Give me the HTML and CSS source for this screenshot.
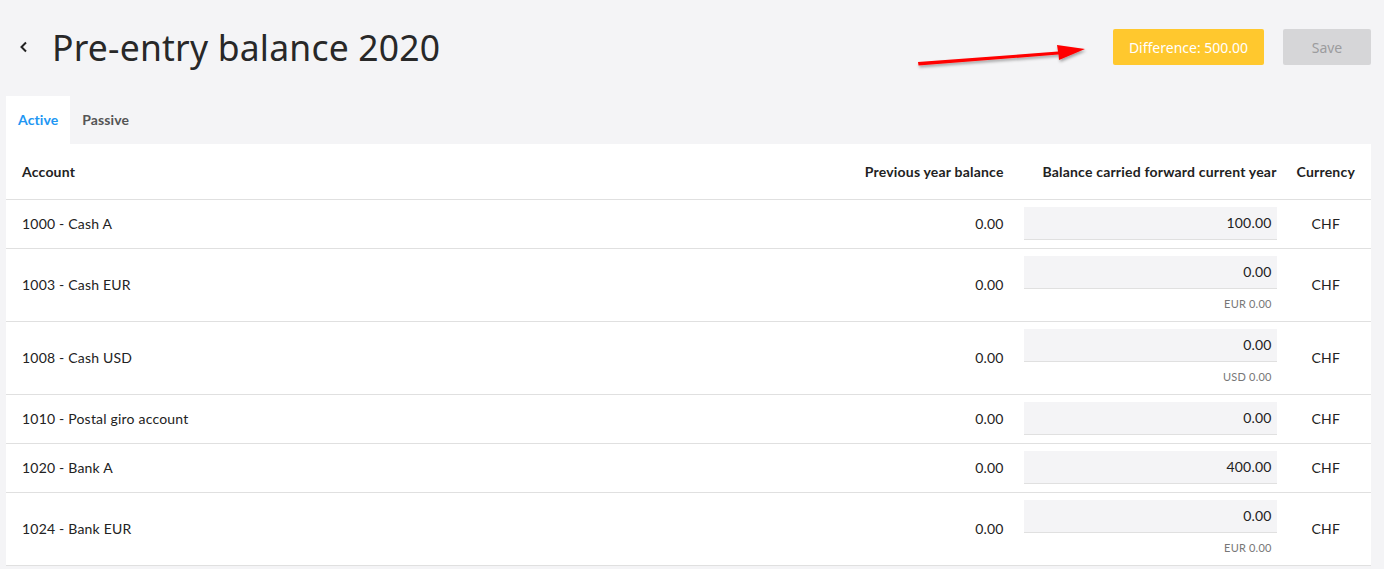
FILE: index.html
```html
<!DOCTYPE html>
<html lang="en">
<head>
    <meta charset="UTF-8">
    <title>Pre-entry balance 2020</title>
    <link rel="stylesheet" href="styles.css">
</head>
<body>

    <div class="page-header">
        <div class="title-wrap">
            <a class="back-link" href="#">
                <svg width="10" height="12" viewBox="0 0 10 12"><path d="M7 1.5 L2.5 6 L7 10.5" fill="none" stroke="#222" stroke-width="2"/></svg>
            </a>
            <h1>Pre-entry balance 2020</h1>
        </div>
        <div class="actions">
            <button class="btn-diff">Difference: 500.00</button>
            <button class="btn-save" disabled>Save</button>
        </div>
        <svg class="arrow" width="200" height="40" viewBox="0 0 200 40">
            <defs>
                <filter id="sh" x="-10%" y="-50%" width="120%" height="200%">
                    <feDropShadow dx="1" dy="2" stdDeviation="1.5" flood-color="#000" flood-opacity="0.35"/>
                </filter>
            </defs>
            <g filter="url(#sh)">
                <polygon points="10,29 150,18.5 149,12 177,16 151,27 150.5,21.5 10.5,32.5" fill="#ff0000"/>
            </g>
        </svg>
    </div>

    <div class="tabs">
        <div class="tab active">Active</div>
        <div class="tab">Passive</div>
    </div>

    <div class="panel">
        <table class="balance-table">
            <thead>
                <tr>
                    <th class="col-account">Account</th>
                    <th class="col-prev">Previous year balance</th>
                    <th class="col-current">Balance carried forward current year</th>
                    <th class="col-currency">Currency</th>
                </tr>
            </thead>
            <tbody>
                <tr>
                    <td class="col-account">1000 - Cash A</td>
                    <td class="col-prev">0.00</td>
                    <td class="col-current"><div class="amount">100.00</div></td>
                    <td class="col-currency">CHF</td>
                </tr>
                <tr class="tall">
                    <td class="col-account">1003 - Cash EUR</td>
                    <td class="col-prev">0.00</td>
                    <td class="col-current"><div class="amount">0.00</div><div class="foreign">EUR 0.00</div></td>
                    <td class="col-currency">CHF</td>
                </tr>
                <tr class="tall">
                    <td class="col-account">1008 - Cash USD</td>
                    <td class="col-prev">0.00</td>
                    <td class="col-current"><div class="amount">0.00</div><div class="foreign">USD 0.00</div></td>
                    <td class="col-currency">CHF</td>
                </tr>
                <tr>
                    <td class="col-account">1010 - Postal giro account</td>
                    <td class="col-prev">0.00</td>
                    <td class="col-current"><div class="amount">0.00</div></td>
                    <td class="col-currency">CHF</td>
                </tr>
                <tr>
                    <td class="col-account">1020 - Bank A</td>
                    <td class="col-prev">0.00</td>
                    <td class="col-current"><div class="amount">400.00</div></td>
                    <td class="col-currency">CHF</td>
                </tr>
                <tr class="tall">
                    <td class="col-account">1024 - Bank EUR</td>
                    <td class="col-prev">0.00</td>
                    <td class="col-current"><div class="amount">0.00</div><div class="foreign">EUR 0.00</div></td>
                    <td class="col-currency">CHF</td>
                </tr>
            </tbody>
        </table>
    </div>

</body>
</html>
```

FILE: styles.css
```css
* {
    margin: 0;
    padding: 0;
    box-sizing: border-box;
}

body {
    background-color: #f4f4f6;
    font-family: Lato, "Noto Sans", sans-serif;
    color: #222;
    padding: 0 13px 0 6px;
}

/* Header */
.page-header {
    position: relative;
    display: flex;
    justify-content: space-between;
    align-items: center;
    height: 96px;
    padding-bottom: 2px;
}

.title-wrap {
    display: flex;
    align-items: center;
}

.back-link {
    display: flex;
    width: 46px;
    padding-left: 13px;
}

h1 {
    font-family: "Noto Sans", sans-serif;
    font-weight: 400;
    font-size: 35.5px;
    color: #282828;
    letter-spacing: 0.2px;
}

.actions {
    display: flex;
    gap: 19px;
}

button {
    height: 36px;
    border: none;
    border-radius: 2px;
    font-family: "Noto Sans", sans-serif;
    font-size: 14px;
}

.btn-diff {
    width: 151px;
    background-color: #ffc82e;
    color: white;
}

.btn-save {
    width: 88px;
    background-color: #d6d6d8;
    color: #9c9c9e;
}

.arrow {
    position: absolute;
    left: 902px;
    top: 33px;
}

/* Tabs */
.tabs {
    display: flex;
    height: 48px;
}

.tab {
    display: flex;
    align-items: center;
    padding: 0 12px 2px;
    font-size: 14px;
    font-weight: bold;
    color: #555;
    letter-spacing: 0.1px;
}

.tab.active {
    background: white;
    color: #2196f3;
}

/* Table */
.panel {
    background: white;
}

.balance-table {
    width: 100%;
    border-collapse: collapse;
    font-size: 14px;
    letter-spacing: 0.2px;
}

.balance-table th {
    height: 55px;
    font-weight: bold;
    border-bottom: 1px solid #e0e0e0;
}

.balance-table td {
    height: 49px;
    border-bottom: 1px solid #e0e0e0;
}

.balance-table tr.tall td {
    height: 73px;
}

.col-account {
    text-align: left;
    padding-left: 16px;
}

.col-prev {
    width: 160px;
    text-align: right;
    padding-right: 10px;
}

.col-current {
    width: 273px;
    text-align: right;
    padding: 0 10px;
}

.col-currency {
    width: 84px;
    text-align: center;
    padding: 0 16px 0 10px;
}

.amount {
    height: 33px;
    line-height: 32px;
    background: #f4f4f6;
    border-bottom: 1px solid #e0e0e0;
    padding-right: 5px;
}

.foreign {
    font-size: 11px;
    color: #777;
    padding: 8px 5px 0 0;
    height: 24px;
}
```
